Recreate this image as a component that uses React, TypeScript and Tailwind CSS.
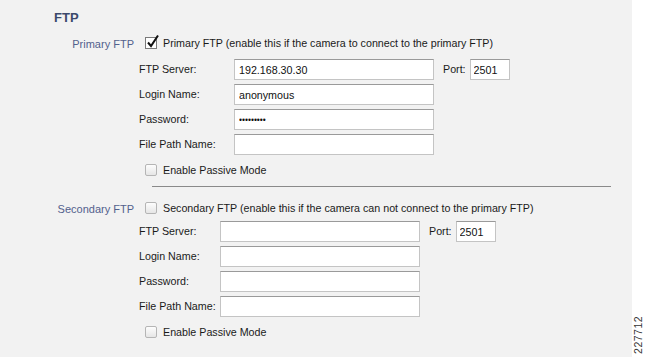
import React from 'react';

const font = { fontFamily: '"Liberation Sans", Arial, sans-serif' };

function Box({ checked }: { checked?: boolean }) {
  if (checked) {
    return (
      <div className="relative w-[12px] h-[12px] border border-[#7a7a7a] bg-white shrink-0">
        <svg className="absolute -top-[4px] left-[0px]" width="14" height="15" viewBox="0 0 14 15">
          <path d="M2 8.5 L5 12 L12 1.5" fill="none" stroke="#111" strokeWidth="2" />
        </svg>
      </div>
    );
  }
  return (
    <div className="w-[12px] h-[12px] rounded-[2px] border border-[#b5b5b5] bg-gradient-to-b from-[#fdfdfd] to-[#e6e6e6] shrink-0" />
  );
}

function CheckRow({ checked, text, className }: { checked?: boolean; text: string; className?: string }) {
  return (
    <div className={`flex items-center h-[20px] pl-[145px] ${className ?? ''}`}>
      <Box checked={checked} />
      <span className="ml-[6px] text-[10.7px] text-[#1a1a1a]">{text}</span>
    </div>
  );
}

function Field({
  label,
  value,
  type,
  labelWidth,
  port,
}: {
  label: string;
  value?: string;
  type?: string;
  labelWidth: string;
  port?: boolean;
}) {
  const isPass = type === 'password';
  return (
    <div className="flex items-center h-[21px] pl-[139px]">
      <span className={`${labelWidth} shrink-0 text-[10.7px] text-[#1a1a1a]`}>{label}</span>
      <input
        readOnly
        type={type ?? 'text'}
        defaultValue={value ?? ''}
        className={`w-[200px] h-[21px] px-[4px] bg-white border border-[#c4c4c4] border-t-[#9a9a9a] ${isPass ? 'text-[8.5px]' : 'text-[10.7px]'} text-[#111] outline-none`}
        style={font}
      />
      {port && (
        <>
          <span className="ml-[9px] text-[10.7px] text-[#1a1a1a]">Port:</span>
          <input
            readOnly
            defaultValue="2501"
            className="ml-[4px] w-[40px] h-[21px] px-[3px] bg-white border border-[#c4c4c4] border-t-[#9a9a9a] text-[10.7px] text-[#111] outline-none"
            style={font}
          />
        </>
      )}
    </div>
  );
}

export default function App() {
  return (
    <div className="flex w-[650px] h-[357px] bg-white overflow-hidden" style={font}>
      <div className="w-[632px] h-full bg-[#f2f2f2] pt-[9px]">
        <div className="pl-[54px] h-[18px] leading-[18px] text-[13px] font-bold text-[#3c4a6c]">FTP</div>

        <div className="relative mt-[6px]">
          <span className="absolute right-[498px] top-[3px] text-[11px] text-[#53618d]">Primary FTP</span>
          <CheckRow checked text="Primary FTP (enable this if the camera to connect to the primary FTP)" />
        </div>
        <div className="flex flex-col gap-[4px] mt-[6px]">
          <Field label="FTP Server:" value="192.168.30.30" labelWidth="w-[95px]" port />
          <Field label="Login Name:" value="anonymous" labelWidth="w-[95px]" />
          <Field label="Password:" value="anonymous" type="password" labelWidth="w-[95px]" />
          <Field label="File Path Name:" labelWidth="w-[95px]" />
        </div>
        <CheckRow text="Enable Passive Mode" className="mt-[5px]" />

        <div className="ml-[152px] w-[459px] mt-[6px] border-t border-[#8a8a8a]" />

        <div className="relative mt-[11px]">
          <span className="absolute right-[498px] top-[3px] text-[11px] text-[#53618d]">Secondary FTP</span>
          <CheckRow text="Secondary FTP (enable this if the camera can not connect to the primary FTP)" />
        </div>
        <div className="flex flex-col gap-[4px] mt-[3px]">
          <Field label="FTP Server:" labelWidth="w-[81px]" port />
          <Field label="Login Name:" labelWidth="w-[81px]" />
          <Field label="Password:" labelWidth="w-[81px]" />
          <Field label="File Path Name:" labelWidth="w-[81px]" />
        </div>
        <CheckRow text="Enable Passive Mode" className="mt-[5px]" />
      </div>
      <div className="relative w-[18px] h-full">
        <span className="absolute left-[-12px] top-[327px] -rotate-90 text-[10.5px] tracking-[0.5px] text-[#333]">227712</span>
      </div>
    </div>
  );
}
